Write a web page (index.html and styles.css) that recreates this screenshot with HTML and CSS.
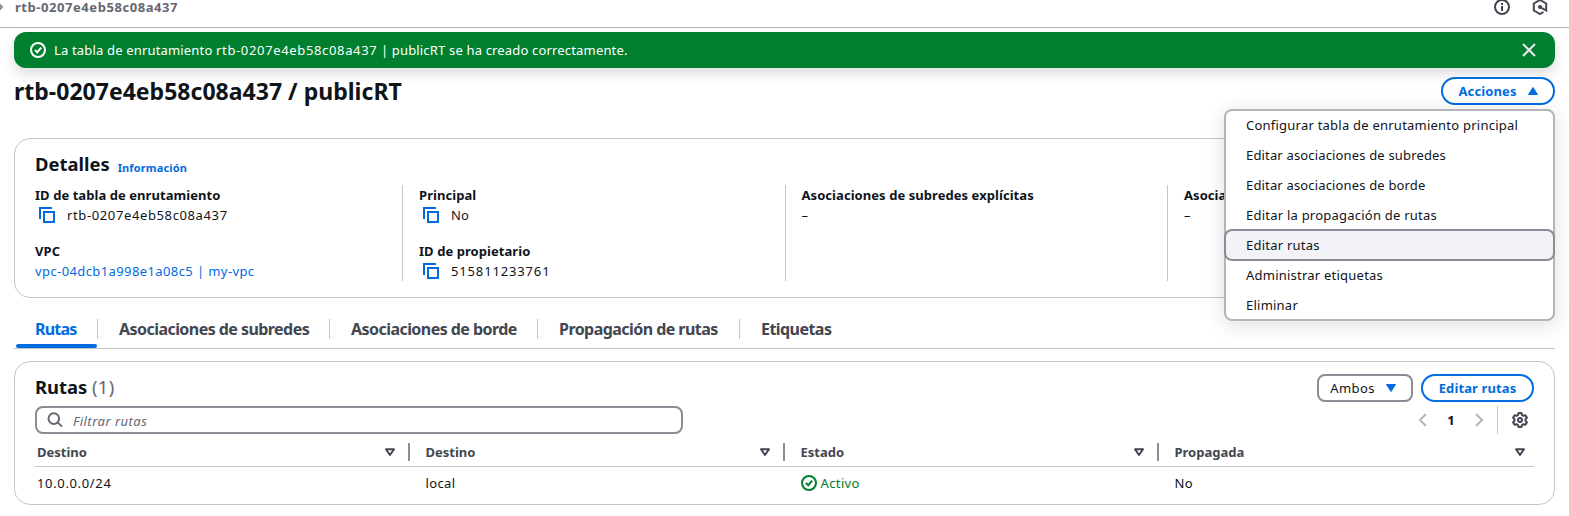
FILE: index.html
```html
<!DOCTYPE html>
<html lang="es">
<head>
<meta charset="utf-8">
<title>rtb-0207e4eb58c08a437</title>
<link rel="stylesheet" href="styles.css">
</head>
<body>
<svg class="defs" width="0" height="0">
  <symbol id="ok" viewBox="0 0 16 16"><circle cx="8" cy="8" r="7"/><path d="M4.9 7.9l2.3 2.3 4-4.6"/></symbol>
  <symbol id="copy" viewBox="0 0 16 16"><path d="M5 5h10v10H5zM1 12V1h12"/></symbol>
  <symbol id="sort" viewBox="0 0 16 16"><path d="M4 5.300h8L8 11z" stroke-linejoin="round"/></symbol>
</svg>
<header class="topbar">
  <div class="crumbs"><svg class="crumb-sep" viewBox="0 0 8 16"><path d="M-3 3l5 5-5 5"/></svg><span class="crumb">rtb-0207e4eb58c08a437</span></div>
  <div class="tools">
    <svg class="icon" viewBox="0 0 16 16"><circle cx="8" cy="8" r="7"/><path d="M8 12V7M8 6V4"/></svg>
    <svg class="icon" viewBox="0 0 16 16"><path d="M11.500 13L8 15l-6.200-3.500v-7L8 1l6.200 3.500v7L8 8"/><circle cx="8" cy="8" r="1"/></svg>
  </div>
</header>
<main class="page">
  <div class="flash">
    <svg class="icon"><use href="#ok"/></svg>
    <span class="flash-text">La tabla de enrutamiento <span class="id">rtb-0207e4eb58c08a437</span> | publicRT se ha creado correctamente.</span>
    <svg class="icon close" viewBox="0 0 16 16"><path d="M2 2l12 12M14 2L2 14"/></svg>
  </div>
  <div class="heading">
    <h1>rtb-0207e4eb58c08a437 / publicRT</h1>
    <div class="actions">
      <button class="btn btn-actions"><span>Acciones</span><svg class="caret" viewBox="0 0 10 8"><path d="M5 .5L9.5 7.5H.5z"/></svg></button>
      <ul class="menu">
        <li>Configurar tabla de enrutamiento principal</li>
        <li class="snug">Editar asociaciones de subredes</li>
        <li class="snug">Editar asociaciones de borde</li>
        <li>Editar la propagación de rutas</li>
        <li class="active">Editar rutas</li>
        <li>Administrar etiquetas</li>
        <li>Eliminar</li>
      </ul>
    </div>
  </div>
  <section class="card details">
    <div class="card-title"><h2>Detalles</h2><a class="info">Información</a></div>
    <div class="columns">
      <div class="col">
        <dl><dt>ID de tabla de enrutamiento</dt><dd><svg class="icon copy"><use href="#copy"/></svg><span class="id">rtb-0207e4eb58c08a437</span></dd></dl>
        <dl><dt>VPC</dt><dd><a class="link">vpc-04dcb1a998e1a08c5 | my-vpc</a></dd></dl>
      </div>
      <div class="col">
        <dl><dt>Principal</dt><dd><svg class="icon copy"><use href="#copy"/></svg><span>No</span></dd></dl>
        <dl><dt>ID de propietario</dt><dd><svg class="icon copy"><use href="#copy"/></svg><span class="num">515811233761</span></dd></dl>
      </div>
      <div class="col"><dl><dt>Asociaciones de subredes explícitas</dt><dd>–</dd></dl></div>
      <div class="col"><dl><dt>Asociaciones de borde</dt><dd>–</dd></dl></div>
    </div>
  </section>
  <nav class="tabs">
    <a class="tab selected"><span>Rutas</span></a>
    <a class="tab"><span>Asociaciones de subredes</span></a>
    <a class="tab"><span>Asociaciones de borde</span></a>
    <a class="tab"><span>Propagación de rutas</span></a>
    <a class="tab"><span>Etiquetas</span></a>
  </nav>
  <section class="card routes">
    <div class="routes-head">
      <h2 class="routes-title">Rutas <span class="count">(1)</span></h2>
      <div class="routes-actions">
        <button class="select"><span>Ambos</span><svg class="caret" viewBox="0 0 10 8"><path d="M.5 .5h9L5 7.5z"/></svg></button>
        <button class="btn btn-edit"><span>Editar rutas</span></button>
      </div>
    </div>
    <div class="filter-row">
      <div class="search"><svg class="icon" viewBox="0 0 16 16"><circle cx="6.8" cy="6.6" r="5.3"/><path d="M10.6 10.4l4.4 4.2"/></svg><span>Filtrar rutas</span></div>
      <div class="pager">
        <svg class="icon arrow" viewBox="0 0 16 16"><path d="M11 2L5 8l6 6"/></svg>
        <b>1</b>
        <svg class="icon arrow" viewBox="0 0 16 16"><path d="M5 2l6 6-6 6"/></svg>
        <span class="gear-box"><svg class="icon gear" viewBox="0 0 16 16"><path d="M6.500 1h3l.5 2 1.400.8 2-.6 1.500 2.600L13.500 7.200v1.600l1.400 1.400-1.500 2.600-2-.6-1.400.8-.5 2h-3l-.5-2-1.400-.8-2 .6-1.500-2.600L2.500 8.800V7.200L1.100 5.800l1.500-2.600 2 .6L6 3z"/><circle cx="8" cy="8" r="2"/></svg></span>
      </div>
    </div>
    <div class="table">
      <div class="row head">
        <div class="th"><span>Destino</span><svg class="icon"><use href="#sort"/></svg></div>
        <div class="th"><span>Destino</span><svg class="icon"><use href="#sort"/></svg></div>
        <div class="th"><span>Estado</span><svg class="icon"><use href="#sort"/></svg></div>
        <div class="th"><span>Propagada</span><svg class="icon"><use href="#sort"/></svg></div>
      </div>
      <div class="row">
        <div class="td cidr">10.0.0.0/24</div>
        <div class="td">local</div>
        <div class="td status"><svg class="icon"><use href="#ok"/></svg><span>Activo</span></div>
        <div class="td">No</div>
      </div>
    </div>
  </section>
</main>
</body>
</html>
```
FILE: styles.css
```css
* { box-sizing: border-box; }
body {
  margin: 0;
  height: 516px;
  overflow: hidden;
  background: #fff;
  color: #0f141a;
  font: 13px/20px "Noto Sans", "Open Sans", sans-serif;
  white-space: nowrap;
}
h1, h2, ul, dl, dd { margin: 0; padding: 0; }
.defs { display: block; position: absolute; }
.icon { width: 16px; height: 16px; flex: none; fill: none; stroke: currentColor; stroke-width: 2; }
.caret { width: 10px; height: 8px; flex: none; fill: #006ce0; stroke: #006ce0; stroke-linejoin: round; }
.id { letter-spacing: .62px; }
.num { letter-spacing: .85px; }
.cidr { letter-spacing: .65px; }

.topbar { height: 28px; display: flex; justify-content: space-between; border-bottom: 1px solid #b4b4bb; color: #424650; }
.crumbs { display: flex; height: 14px; align-items: center; }
.crumb-sep { width: 8px; height: 16px; margin-right: 7px; fill: none; stroke: #8c8c94; stroke-width: 2; }
.crumb { font-weight: 700; color: #656871; letter-spacing: .56px; }
.tools { display: flex; gap: 22px; padding-right: 21px; height: 14px; align-items: center; }

.page { padding: 4px 14px 0; }
.flash {
  height: 36px; display: flex; align-items: center; padding: 0 18px 0 16px; gap: 8px;
  color: #fff; background: #00802f; border-radius: 12px; box-shadow: 0 6px 12px 1px rgba(0, 7, 22, .12);
}
.flash-text { letter-spacing: .17px; }
.flash-text .id { letter-spacing: .65px; }
.close { margin-left: auto; stroke: #ebebf0; }

.heading { height: 70px; padding-top: 9px; display: flex; justify-content: space-between; }
h1 { font-size: 23px; line-height: 28px; letter-spacing: .02px; }
.actions { position: relative; }
.btn, .select {
  height: 28px; display: flex; align-items: center; justify-content: center; background: #fff; font: inherit; padding: 0;
  border: 2px solid #006ce0; border-radius: 14px;
}
.btn { color: #006ce0; font-weight: 700; letter-spacing: .12px; }
.btn-actions { width: 114px; gap: 11px; }
.menu {
  position: absolute; z-index: 2; right: 0; top: 32px; width: 331px; height: 212px; list-style: none;
  background: #fff; border: 2px solid #b4b4bb; border-radius: 8px; box-shadow: 0 4px 20px 1px rgba(0, 7, 22, .12);
}
.menu li { height: 30px; line-height: 30px; padding-left: 20px; letter-spacing: .23px; }
.menu .snug { letter-spacing: .16px; }
.menu li:first-child { margin-top: -1px; }
.menu .active {
  position: relative; height: 32px; line-height: 28px; margin: -1px -2px; padding-left: 20px;
  background: #f3f3f7; border: 2px solid #8c8c94; border-radius: 8px;
}

.card { border: 1px solid #c6c6cd; border-radius: 16px; }
.details { height: 160px; padding: 13px 20px 0; }
.card-title { display: flex; align-items: baseline; gap: 8px; height: 24px; }
h2 { font-size: 18.4px; line-height: 24px; }
.info { font-size: 11px; font-weight: 700; color: #006ce0; letter-spacing: .15px; position: relative; top: 1px; }
.columns { display: grid; grid-template-columns: 367px 383px 382px 1fr; height: 96px; margin-top: 9px; }
.col { border-left: 1px solid #c6c6cd; padding-left: 16px; display: flex; flex-direction: column; gap: 16px; }
.col:nth-child(3) { padding-left: 15.500px; }
.col:first-child { border: 0; padding: 0; }
dt { font-weight: 700; letter-spacing: .06px; }
dd { display: flex; align-items: center; }
.copy { color: #006ce0; margin: 0 12px 0 4px; }
.link { color: #006ce0; letter-spacing: .4px; }

.tabs { display: grid; grid-template-columns: 84px 232px 208px 202px 1fr; height: 51px; padding-top: 13px; border-bottom: 1px solid #c6c6cd; }
.tab { font-size: 16px; font-weight: 700; color: #424650; height: 37px; padding-top: 8px; letter-spacing: -.55px; }
.tab span { display: block; height: 20px; line-height: 20px; padding-left: 21px; border-right: 1px solid #c6c6cd; }
.tab:last-child span { border: 0; }
.selected { color: #006ce0; letter-spacing: -.8px; }
.selected::after { content: ""; display: block; height: 4px; margin: 5px 1px 0 2px; border-radius: 2px; background: #006ce0; }

.routes { margin-top: 12px; height: 144px; padding: 12px 20px 0; }
.routes-head { height: 28px; display: flex; align-items: center; justify-content: space-between; }
.routes-title { margin-top: -2px; }
.count { font-weight: 400; color: #656871; letter-spacing: .3px; }
.routes-actions { display: flex; gap: 8px; }
.select { width: 96px; border-color: #8c8c94; border-radius: 8px; gap: 11px; padding-right: 4px; color: #0f141a; letter-spacing: .4px; }
.btn-edit { width: 113px; }
.filter-row { display: flex; justify-content: space-between; margin-top: 4px; }
.search { width: 648px; height: 28px; border: 2px solid #8c8c94; border-radius: 8px; display: flex; align-items: center; padding-left: 10px; gap: 10px; color: #656871; font-style: italic; letter-spacing: .48px; }
.search span { padding-top: 2px; }
.pager { display: flex; align-items: center; height: 28px; padding-right: 6px; }
.pager b { width: 40px; text-align: center; }
.arrow { stroke: #b4b4bb; }
.gear-box { margin-left: 10px; border-left: 1px solid #c6c6cd; height: 28px; padding: 6px 0 0 14px; color: #424650; }
.gear { display: block; stroke-linejoin: round; }
.row { display: grid; grid-template-columns: 375px 375px 374px 1fr; height: 32px; align-items: center; }
.head { height: 33px; padding-top: 4px; border-bottom: 1px solid #c6c6cd; color: #424650; font-weight: 700; }
.th { display: flex; align-items: center; justify-content: space-between; height: 18px; padding-right: 10px; border-right: 2px solid #8c8c94; }
.td:not(.cidr) { letter-spacing: .38px; }
.th + .th, .td + .td { padding-left: 15.500px; }
.th:first-child, .td:first-child { padding-left: 2px; }
.th:last-child { border: 0; padding-right: 6px; }
.status { display: flex; align-items: center; gap: 4px; color: #00802f; }
```
